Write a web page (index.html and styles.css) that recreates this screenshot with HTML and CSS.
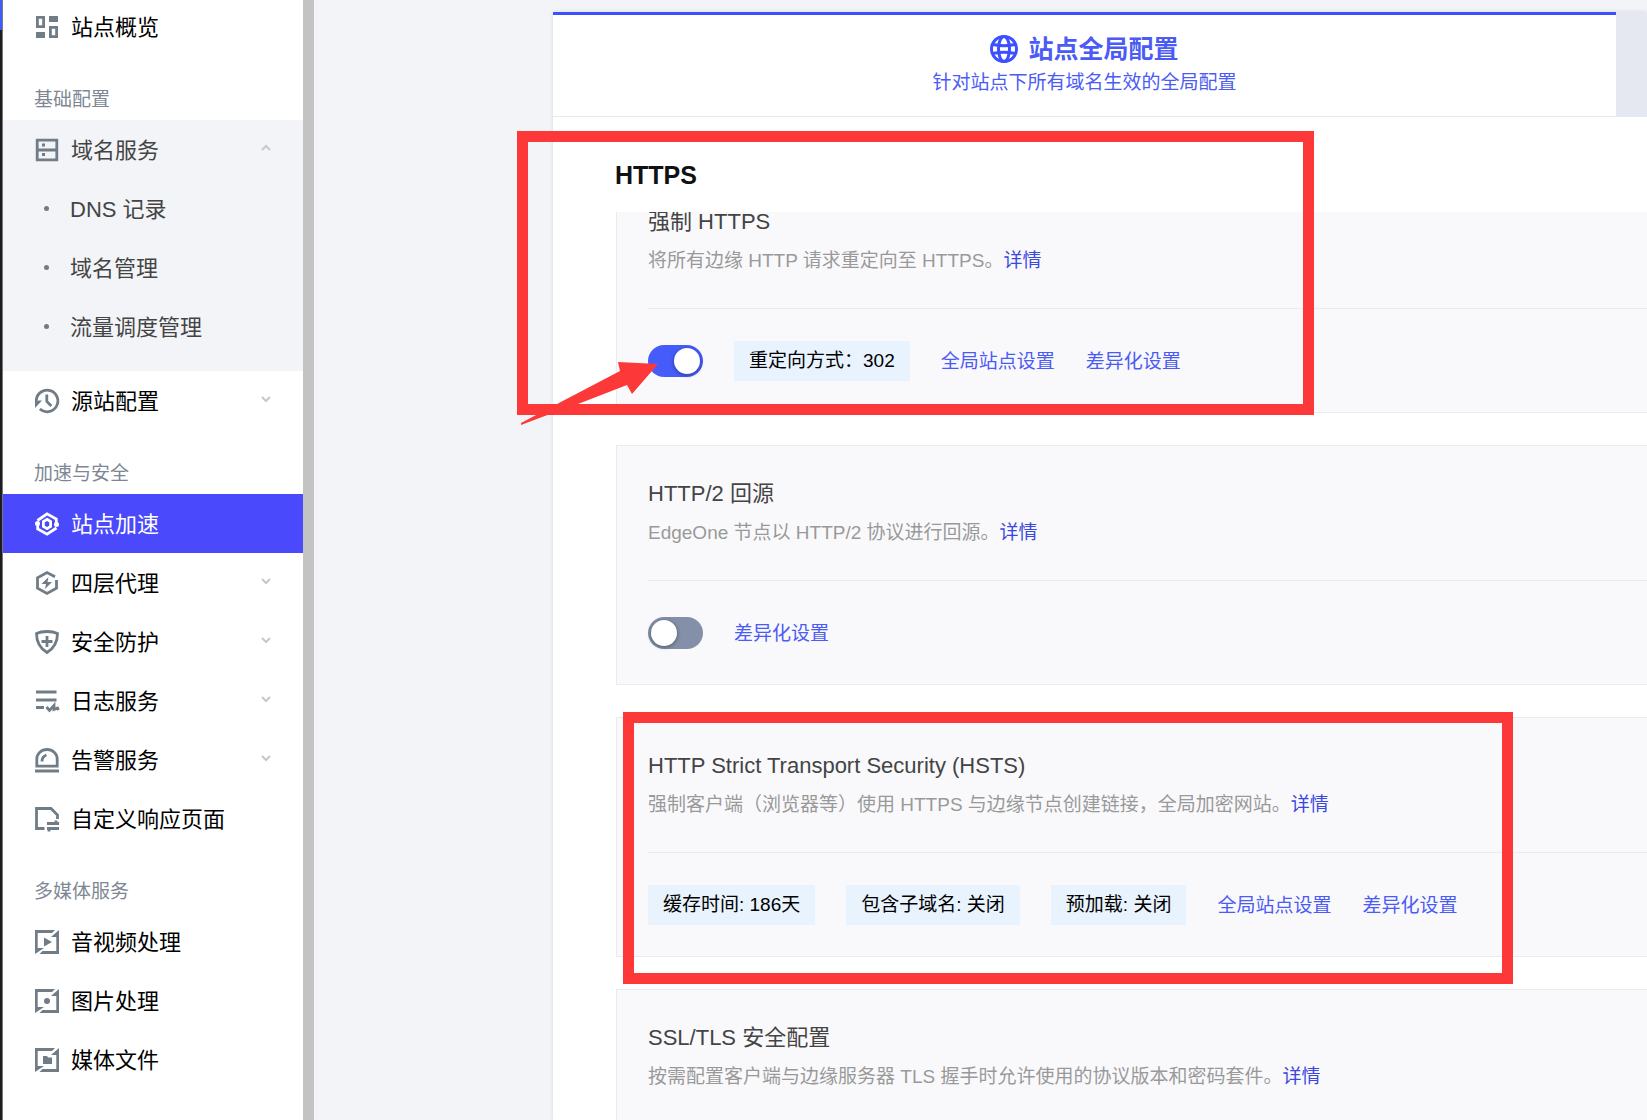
FILE: index.html
```html
<!DOCTYPE html>
<html lang="zh-CN">
<head>
    <meta charset="UTF-8">
    <meta name="viewport" content="width=device-width, initial-scale=1.0">
    <title>站点加速</title>
    <link rel="stylesheet" href="styles.css">
</head>
<body>
    <aside class="sidebar">
        <nav class="menu">
            <a class="item" href="#">
                <svg class="icon" viewBox="0 0 24 24"><path d="M2.400 2.400h6.200v9.200H2.400zM15.400 12.400h6.200v9.200h-6.200z"/><path class="fill" d="M14 1h9v6h-9zM1 17h9v6H1z"/></svg>
                <span>站点概览</span>
            </a>

            <h3>基础配置</h3>
            <div class="group">
                <a class="item" href="#">
                    <svg class="icon" viewBox="0 0 24 24"><path d="M2.200 2.200h19.600v19.600H2.200zM2 12h20"/><path class="fill" d="M7 5.500h3v3H7zM7 15h3v3H7z"/></svg>
                    <span>域名服务</span>
                    <svg class="arrow" viewBox="0 0 10 10"><path d="M1 7l4-4 4 4"/></svg>
                </a>
                <a class="item sub" href="#"><span>DNS 记录</span></a>
                <a class="item sub" href="#"><span>域名管理</span></a>
                <a class="item sub" href="#"><span>流量调度管理</span></a>
            </div>
            <a class="item" href="#">
                <svg class="icon" viewBox="0 0 24 24"><path d="M1.300 11A10.800 10.800 0 1 1 4.800 20M11.800 5.500V12.500l4.500 4.500"/><path class="fill" d="M0 9l2.500 2.500H7L0 19z"/></svg>
                <span>源站配置</span>
                <svg class="arrow" viewBox="0 0 10 10"><path d="M1 3l4 4 4-4"/></svg>
            </a>

            <h3>加速与安全</h3>
            <a class="item active" href="#">
                <svg class="icon" viewBox="0 0 24 24"><path d="M2.500 8.500L12 1.800l9.300 5.200V12M21.500 16L12 22.200 2.700 17V12"/><path d="M12 7.300l3.600 2.200v5L12 16.700l-3.600-2.200v-5z"/><circle class="fill" cx="21.500" cy="12.500" r="2.500"/><circle class="fill" cx="2.500" cy="11.500" r="2.500"/></svg>
                <span>站点加速</span>
            </a>
            <a class="item" href="#">
                <svg class="icon" viewBox="0 0 24 24"><path d="M20 5.800L12 1.600 2.500 6.800v10.400l9.500 5.200 9.500-5.200V9"/><path class="fill" d="M13.500 6l-7 7h4.500l-1 5 7-7h-4.500z"/></svg>
                <span>四层代理</span>
                <svg class="arrow" viewBox="0 0 10 10"><path d="M1 3l4 4 4-4"/></svg>
            </a>
            <a class="item" href="#">
                <svg class="icon" viewBox="0 0 24 24"><path d="M12 1.500c4 0 7.500.5 10.500 2 0 8-3 14.500-10.500 19C4.500 18 1.500 11.500 1.500 3.500 4.500 2 8 1.500 12 1.500zM12 6v11M6.500 11.500h11"/></svg>
                <span>安全防护</span>
                <svg class="arrow" viewBox="0 0 10 10"><path d="M1 3l4 4 4-4"/></svg>
            </a>
            <a class="item" href="#">
                <svg class="icon" viewBox="0 0 24 24"><path d="M1 3h20.500M1 11h20.500M1 18.500h8M11.500 18l3 3.500 4.500-5v4l3.500-1.500 1 2"/></svg>
                <span>日志服务</span>
                <svg class="arrow" viewBox="0 0 10 10"><path d="M1 3l4 4 4-4"/></svg>
            </a>
            <a class="item" href="#">
                <svg class="icon" viewBox="0 0 24 24"><path d="M1.800 18.200V11a10.200 9.500 0 0 1 20.400 0v7.200zM0 23h24M7 13.500c0-3.500 1.500-5.500 4.500-6.500"/></svg>
                <span>告警服务</span>
                <svg class="arrow" viewBox="0 0 10 10"><path d="M1 3l4 4 4-4"/></svg>
            </a>
            <a class="item" href="#">
                <svg class="icon" viewBox="0 0 24 24"><path d="M9.500 21.500H1.500V1.500h14.500l6.500 6.500v4M12 16.500h12M12 21.500h12M21 17v-3.500M14 21v3.500"/></svg>
                <span>自定义响应页面</span>
            </a>

            <h3>多媒体服务</h3>
            <a class="item" href="#">
                <svg class="icon" viewBox="0 0 24 24"><path class="fill" d="M0 0h20l-3 3H2.700v15H9l-9 6zM24 24H4.500l3-3h13.800V7H16l8-7zM9 7.500l8 4.500-8 4.500z"/></svg>
                <span>音视频处理</span>
            </a>
            <a class="item" href="#">
                <svg class="icon" viewBox="0 0 24 24"><path class="fill" d="M0 0h20l-3 3H2.700v15H9l-9 6zM24 24H4.500l3-3h13.800V7H16l8-7z"/><circle class="fill" cx="12" cy="12" r="3"/></svg>
                <span>图片处理</span>
            </a>
            <a class="item" href="#">
                <svg class="icon" viewBox="0 0 24 24"><path class="fill" d="M0 0h20l-3 3H2.700v15H9l-9 6zM24 24H4.500l3-3h13.800V7H16l8-7zM8 8h4l1 1.500h4V16H8z"/></svg>
                <span>媒体文件</span>
            </a>
        </nav>
    </aside>

    <main>
        <div class="panel">
            <div class="tabs">
                <a class="tab" href="#">
                    <span class="tab-title">
                        <svg class="globe" viewBox="0 0 28 28"><circle cx="14" cy="14" r="12.500"/><ellipse cx="14" cy="14" rx="5.500" ry="12.500"/><path d="M3 9.500c7 1.500 15 1.500 22 0M3 18.500c7-1.500 15-1.500 22 0"/></svg>
                        站点全局配置
                    </span>
                    <span class="tab-desc">针对站点下所有域名生效的全局配置</span>
                </a>
                <div class="tab-next"></div>
            </div>

            <h2>HTTPS</h2>
            <div class="list">
                <section class="card">
                    <h4><label for="forceHttps">强制 HTTPS</label></h4>
                    <p>将所有边缘 HTTP 请求重定向至 HTTPS。<a href="#">详情</a></p>
                    <div class="controls">
                        <input type="checkbox" class="switch" id="forceHttps" checked>
                        <span class="tag">重定向方式：302</span>
                        <a href="#">全局站点设置</a>
                        <a href="#">差异化设置</a>
                    </div>
                </section>
                <section class="card">
                    <h4><label for="http2">HTTP/2 回源</label></h4>
                    <p>EdgeOne 节点以 HTTP/2 协议进行回源。<a href="#">详情</a></p>
                    <div class="controls">
                        <input type="checkbox" class="switch" id="http2">
                        <a href="#">差异化设置</a>
                    </div>
                </section>
                <section class="card">
                    <h4>HTTP Strict Transport Security (HSTS)</h4>
                    <p>强制客户端（浏览器等）使用 HTTPS 与边缘节点创建链接，全局加密网站。<a href="#">详情</a></p>
                    <div class="controls">
                        <span class="tag">缓存时间: 186天</span>
                        <span class="tag">包含子域名: 关闭</span>
                        <span class="tag">预加载: 关闭</span>
                        <a href="#">全局站点设置</a>
                        <a href="#">差异化设置</a>
                    </div>
                </section>
                <section class="card">
                    <h4>SSL/TLS 安全配置</h4>
                    <p>按需配置客户端与边缘服务器 TLS 握手时允许使用的协议版本和密码套件。<a href="#">详情</a></p>
                    <div class="controls"></div>
                </section>
            </div>
        </div>
    </main>

    <!-- 标注 -->
    <div class="mark mark-https"></div>
    <div class="mark mark-hsts"></div>
    <svg class="pointer" viewBox="0 0 140 66"><path d="M1 62L37 43 100 10 98 1l40 2-26 30-5-9L58 43 22 56 1 64z"/></svg>
</body>
</html>
```
FILE: styles.css
```css
* {
    box-sizing: border-box;
}

body {
    display: flex;
    height: 100vh;
    margin: 0;
    overflow: hidden;
    background-color: #f3f4f8;
    color: #000;
    font-family: "Liberation Sans", "Noto Sans CJK SC", sans-serif;
    font-size: 19px;
}

/* 最左侧的深色边 */
body::before {
    content: "";
    flex: none;
    width: 2px;
    background: linear-gradient(#3c5cff 30px, #1d1d1f 30px);
}

a {
    color: #4b5bf5;
    text-decoration: none;
}

h2, h3, h4, p {
    margin: 0;
    font-weight: normal;
}

/* 左侧菜单 */
.sidebar {
    flex: none;
    width: 312px;
    overflow: hidden;
    background-color: #fff;
    border-left: 1px solid #777;
    border-right: 11px solid #c3c3c3;
}

.menu {
    margin-top: -3px;
}

.menu h3 {
    padding: 33px 31px 9px;
    font-size: 19px;
    line-height: 22px;
    color: #7d8794;
}

.item {
    display: flex;
    align-items: center;
    gap: 12px;
    height: 59px;
    padding: 0 32px;
    font-size: 22px;
    color: #000;
}

.item span {
    padding-bottom: 4px;
}

.item.active {
    background-color: #4a49fb;
    color: #fff;
}

.group {
    padding-bottom: 15px;
    background-color: #f3f4f8;
}

.group .item {
    color: #444;
}

.sub::before {
    content: "";
    width: 5px;
    height: 5px;
    margin: 0 9px;
    border-radius: 50%;
    background-color: #707b87;
}

.icon {
    flex: none;
    width: 24px;
    height: 24px;
    overflow: visible;
    fill: none;
    stroke: #707c86;
    stroke-width: 2.8;
}

.icon .fill {
    fill: #707c86;
    stroke: none;
}

.active .icon {
    stroke: #fff;
}

.active .icon .fill {
    fill: #fff;
}

.arrow {
    width: 10px;
    height: 10px;
    margin-left: auto;
    margin-bottom: 4px;
    fill: none;
    stroke: #c4c7cc;
    stroke-width: 2;
}

/* 内容区 */
main {
    flex: 1;
    min-width: 0;
    padding: 12px 0 0 239px;
}

.panel {
    height: 100%;
    background-color: #fff;
    box-shadow: 0 0 4px #d4d8e0;
}

.tabs {
    display: flex;
    height: 105px;
    border-bottom: 1px solid #e5e8ee;
    background-color: #fff;
}

.tab {
    display: flex;
    flex: 1;
    flex-direction: column;
    align-items: center;
    padding-top: 18px;
    border-top: 3px solid #3c50ff;
}

.tab-title {
    display: flex;
    align-items: center;
    gap: 10px;
    font-size: 25px;
    font-weight: bold;
    line-height: 32px;
}

.tab-desc {
    line-height: 36px;
}

.tab-next {
    width: 31px;
    background-color: #e5e8f0;
}

.globe {
    width: 28px;
    height: 28px;
    fill: none;
    stroke: #3c50ff;
    stroke-width: 3;
}

h2 {
    padding: 38px 0 17px 62px;
    font-size: 25px;
    font-weight: bold;
    line-height: 40px;
    color: #111;
}

.list {
    padding-left: 63px;
    overflow: hidden;
}

.card {
    height: 240px;
    margin-bottom: 32px;
    padding: 33px 0 0 31px;
    background-color: #f9f9fc;
    border: 1px solid #e9ebf0;
    border-right: none;
}

/* 第一张卡片已滚动到标题下方 */
.card:first-child {
    margin-top: -39px;
}

.card h4 {
    font-size: 22px;
    line-height: 30px;
    color: #444;
}

.card p {
    margin-top: 10px;
    line-height: 28px;
    color: #999;
}

.card p a {
    color: #3a48e0;
}

.controls {
    display: flex;
    align-items: center;
    gap: 31px;
    margin-top: 33px;
    padding-top: 32px;
    border-top: 1px solid #e9ebf0;
}

.controls a {
    padding-top: 2px;
    line-height: 38px;
}

.tag {
    padding: 0 15px;
    background-color: #e8f3fe;
    line-height: 40px;
}

.switch {
    appearance: none;
    width: 55px;
    height: 32px;
    margin: 4px 0;
    padding: 3px;
    border-radius: 16px;
    background-color: #8490a8;
    cursor: pointer;
}

.switch::before {
    content: "";
    display: block;
    width: 26px;
    height: 26px;
    border-radius: 50%;
    background-color: #fff;
    box-shadow: 0 1px 4px rgba(0, 0, 0, 0.4);
}

.switch:checked {
    background-color: #465cfa;
}

.switch:checked::before {
    margin-left: auto;
}

/* 红框和箭头 */
.mark {
    position: absolute;
    border: 11px solid #fc3838;
}

.mark-https {
    top: 131px;
    left: 517px;
    width: 797px;
    height: 284px;
}

.mark-hsts {
    top: 712px;
    left: 623px;
    width: 890px;
    height: 272px;
}

.pointer {
    position: absolute;
    top: 361px;
    left: 520px;
    width: 140px;
    height: 66px;
    fill: #fc3838;
}
```
